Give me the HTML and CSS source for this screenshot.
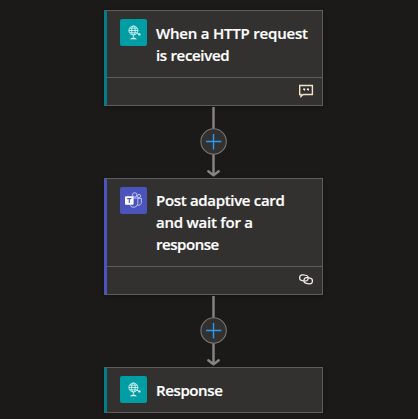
FILE: index.html
```html
<!DOCTYPE html>
<html lang="en">
<head>
<meta charset="utf-8">
<title>Workflow designer</title>
<link rel="stylesheet" href="styles.css">
</head>
<body>
<svg class="defs" width="0" height="0">
  <symbol id="globe" viewBox="0 0 27 27">
    <g fill="none" stroke="#d5f4f4" stroke-width=".9">
      <circle cx="13.4" cy="11.5" r="4.5"/>
      <ellipse cx="13.4" cy="11.5" rx="1.9" ry="4.5"/>
      <path d="M8.9 11.5h9M9.7 9.2h7.4M9.7 13.8h7.4M13.4 16.2v2.3M17 14.2l2 1"/>
    </g>
    <path d="M9.8 20.2q3.6-3.4 7.2 0z" fill="#fff"/>
    <circle cx="19.4" cy="15.4" r="1.2" fill="#e5ffff"/>
  </symbol>
  <symbol id="connector" viewBox="0 0 30 72">
    <path d="M14.5 1v68" stroke="#888684" stroke-width="2.4" fill="none"/>
    <path d="M9.3 65.2l5.2 4.2 5.2-4.2" stroke="#888684" stroke-width="2.4" fill="none" stroke-linecap="round" stroke-linejoin="round"/>
    <circle cx="14.6" cy="35.5" r="12.7" fill="#323130" stroke="#777573" stroke-width="1.1"/>
    <path d="M7 35.5h15.4M14.5 28v15.4" stroke="#2899f5" stroke-width="1.4"/>
  </symbol>
</svg>
<main class="flow">
  <section class="card http">
    <header class="head">
      <svg class="icon"><use href="#globe"/></svg>
      <h2><span class="l1">When a HTTP request</span><br><span class="l2">is received</span></h2>
    </header>
    <footer class="foot">
      <svg class="note" viewBox="0 0 16 16" fill="none"><path d="M1.7 2.5h12.7v9H5.2l-2.2 2v-2H1.7z" stroke="#f3e3c5" stroke-width="1.4"/><path d="M5.2 5.5h2v1.8l-1 .8v-1h-1zM8.9 5.5h2v1.8l-1 .8v-1h-1z" fill="#fff"/></svg>
    </footer>
  </section>
  <svg class="link"><use href="#connector"/></svg>
  <section class="card teams">
    <header class="head">
      <svg class="icon" viewBox="0 0 27 27">
        <g fill="none" stroke="#c9cdf5" stroke-width=".9"><circle cx="14.7" cy="7.9" r="2.2"/><circle cx="19" cy="9" r="1.6"/><path d="M13.5 11h4.4v5.2a4.3 4.3 0 0 1-8 2M18 11.4h3.4v4a3 3 0 0 1-3.7 2.9"/></g>
        <rect x="5" y="9.2" width="8.6" height="8.6" rx=".7" fill="#fff"/>
        <path d="M7.2 11.6h4.2M9.3 11.6v4.5" stroke="#4b53bc" stroke-width="1.1"/>
      </svg>
      <h2><span class="l3">Post adaptive card</span><br><span class="l4">and wait for a</span><br><span class="l5">response</span></h2>
    </header>
    <footer class="foot">
      <svg class="note" viewBox="0 0 16 16" fill="none" stroke="#eeeae4" stroke-width="1.25"><rect x="1.6" y="3" width="8.6" height="5.8" rx="2.9" transform="rotate(8 5.7 6)"/><rect x="5.9" y="5.8" width="8.6" height="5.8" rx="2.9" transform="rotate(8 10.2 8.7)"/></svg>
    </footer>
  </section>
  <svg class="link"><use href="#connector"/></svg>
  <section class="card http last">
    <header class="head">
      <svg class="icon"><use href="#globe"/></svg>
      <h2><span class="l6">Response</span></h2>
    </header>
  </section>
</main>
</body>
</html>
```
FILE: styles.css
```css
* { box-sizing: border-box; }
body { margin: 0; background: #1b1a19; font-family: "Segoe UI", "Open Sans", "Noto Sans", sans-serif; }
.defs { display: block; height: 0; }
.flow { display: flex; flex-direction: column; align-items: center; width: 219px; margin: 10px 0 0 104px; }
.card { width: 219px; height: 96px; display: flex; flex-direction: column; background: #323130; border: 1px solid #605e5c; border-left: 3px solid #007e88; box-shadow: 0 1px 4px #0005; }
.teams { height: 117px; border-left-color: #4b53bc; }
.last { height: 46px; }
.head { flex: 1; display: flex; align-items: flex-start; gap: 9px; padding: 8px 0 0 13px; }
.icon { display: block; flex: none; width: 27px; height: 27px; border-radius: 2px; background: #009da5; }
.teams .icon { background: #4b53bc; }
h2 { margin: 3px 0 0; font-size: 15px; line-height: 22px; font-weight: 600; color: #fff; white-space: nowrap; -webkit-text-stroke: .2px #fff; }
.teams h2 { margin-top: 2px; }
.l1 { letter-spacing: -.2px; }
.l2, .l3 { letter-spacing: -.32px; }
.l4 { letter-spacing: -.23px; }
.l5 { letter-spacing: -.45px; }
.l6 { letter-spacing: -.38px; }
.foot { height: 28px; border-top: 1px solid #605e5c; display: flex; justify-content: flex-end; padding: 5px 8px 0 0; }
.note { display: block; width: 16px; height: 16px; }
.link { display: block; width: 30px; height: 72px; }
```
